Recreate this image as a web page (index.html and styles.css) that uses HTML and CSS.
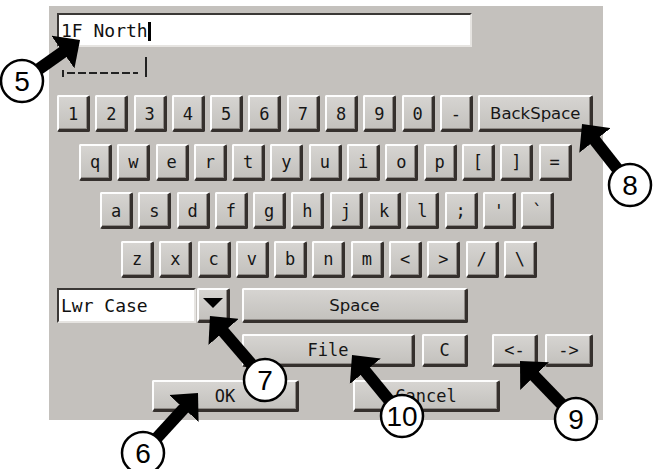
FILE: index.html
```html
<!DOCTYPE html>
<html>
<head>
<meta charset="utf-8">
<link rel="stylesheet" href="styles.css">
</head>
<body>
<div class="panel">
  <div class="input"><span class="txt">1F North</span><span class="caret"></span></div>
  <div class="indicator"><span class="tick"></span><span class="dashes"></span><span class="bar"></span></div>
  <div class="row r1">
    <div class="key">1</div><div class="key">2</div><div class="key">3</div><div class="key">4</div><div class="key">5</div><div class="key">6</div><div class="key">7</div><div class="key">8</div><div class="key">9</div><div class="key">0</div><div class="key">-</div><div class="key sans bs">BackSpace</div>
  </div>
  <div class="row r2">
    <div class="key">q</div><div class="key">w</div><div class="key">e</div><div class="key">r</div><div class="key">t</div><div class="key">y</div><div class="key">u</div><div class="key">i</div><div class="key">o</div><div class="key">p</div><div class="key">[</div><div class="key">]</div><div class="key">=</div>
  </div>
  <div class="row r3">
    <div class="key">a</div><div class="key">s</div><div class="key">d</div><div class="key">f</div><div class="key">g</div><div class="key">h</div><div class="key">j</div><div class="key">k</div><div class="key">l</div><div class="key">;</div><div class="key">'</div><div class="key">`</div>
  </div>
  <div class="row r4">
    <div class="key">z</div><div class="key">x</div><div class="key">c</div><div class="key">v</div><div class="key">b</div><div class="key">n</div><div class="key">m</div><div class="key">&lt;</div><div class="key">&gt;</div><div class="key">/</div><div class="key">\</div>
  </div>
  <div class="row r5">
    <div class="select">Lwr Case</div>
    <div class="key dd"><span class="tri"></span></div>
    <div class="key sans space">Space</div>
  </div>
  <div class="row r6">
    <div class="key file">File</div>
    <div class="key c">C</div>
    <div class="key arrowl">&lt;-</div>
    <div class="key arrowr">-&gt;</div>
  </div>
  <div class="row r7">
    <div class="key ok">OK</div>
    <div class="key cancel">Cancel</div>
  </div>
</div>
<svg class="notes" width="656" height="469" viewBox="0 0 656 469">
  <defs>
    <marker id="ah" markerUnits="userSpaceOnUse" markerWidth="21" markerHeight="40" viewBox="0 0 21 40" refX="1" refY="20" orient="auto">
      <path d="M0,0 L21,20 L0,40 Z" fill="#000"/>
    </marker>
  </defs>
  <g stroke="#000" stroke-width="12" marker-end="url(#ah)">
    <line x1="22" y1="81" x2="63.7" y2="51.5"/>
    <line x1="143" y1="453" x2="184.5" y2="407.7"/>
    <line x1="265" y1="380" x2="223" y2="331.2"/>
    <line x1="630" y1="185" x2="594.4" y2="139.7"/>
    <line x1="576" y1="419" x2="533.9" y2="375.4"/>
    <line x1="402" y1="416" x2="364.7" y2="370.5"/>
  </g>
  <g fill="#fff" stroke="#000" stroke-width="2.5">
    <circle cx="22" cy="81" r="21"/>
    <circle cx="143" cy="453" r="21"/>
    <circle cx="265" cy="380" r="21"/>
    <circle cx="630" cy="185" r="21"/>
    <circle cx="576" cy="419" r="21"/>
    <circle cx="402" cy="416" r="21"/>
  </g>
  <g class="num" text-anchor="middle">
    <text x="22" y="91">5</text>
    <text x="143" y="463">6</text>
    <text x="265" y="390">7</text>
    <text x="630" y="195">8</text>
    <text x="576" y="429">9</text>
    <text x="402" y="426">10</text>
  </g>
</svg>
</body>
</html>
```
FILE: styles.css
```css
* { box-sizing: border-box; }
html, body { margin: 0; padding: 0; }
body {
  background: #fff;
  position: relative;
  width: 656px;
  height: 469px;
  overflow: hidden;
  font-family: "DejaVu Sans Mono", monospace;
  color: #1c1c1c;
}
.panel {
  margin: 6px 0 0 49px;
  width: 554px;
  height: 414px;
  background: #c4c1bd;
  padding: 7px 0 0 8px;
  display: flex;
  flex-direction: column;
}
.input {
  width: 415px;
  height: 34px;
  flex: none;
  background: #fff;
  border-style: solid;
  border-width: 2px;
  border-color: #3b3836 #e6e4e1 #e6e4e1 #3b3836;
  display: flex;
  align-items: center;
  padding-left: 2px;
  font-size: 18px;
  color: #111;
}
.caret { width: 3px; height: 19px; background: #000; margin-top: 2px; }
.indicator {
  display: flex;
  align-items: flex-end;
  height: 20px;
  flex: none;
  margin-top: 10px;
  padding-left: 5px;
}
.tick { width: 2px; height: 7px; background: #222; }
.dashes {
  width: 71px;
  height: 2px;
  margin: 0 0 3px 3px;
  background: repeating-linear-gradient(90deg, #222 0 8px, transparent 8px 11px);
}
.bar { width: 2px; height: 20px; background: #222; margin-left: 7px; }

.row { display: flex; gap: 5.3px; margin-top: 11.5px; height: 37px; flex: none; }
.r1 { margin-top: 18px; }
.r2 { margin-left: 22px; }
.r3 { margin-left: 43px; }
.r4 { margin-left: 64px; }
.r5 { margin-top: 10px; height: 35px; gap: 0; }
.r6 { margin-top: 11px; height: 33px; gap: 0; }
.r7 { margin-top: 13px; height: 32px; gap: 0; }

.key {
  width: 33px;
  height: 100%;
  flex: none;
  display: flex;
  align-items: center;
  justify-content: center;
  font-size: 17px;
  color: #161616;
  background: linear-gradient(#d6d4d1, #c3c1bd);
  border-style: solid;
  border-width: 2px 3px 3px 2px;
  border-color: #fdfdfd #35302d #35302d #fdfdfd;
  box-shadow: inset -1px -1px 0 #8e8a86;
  border-radius: 2px;
  padding-top: 1px;
}
.sans { font-family: "DejaVu Sans", sans-serif; font-size: 16.5px; }
.bs { width: 115px; }
.select {
  width: 139px;
  height: 100%;
  background: #fff;
  border-style: solid;
  border-width: 2px;
  border-color: #3b3836 #e6e4e1 #e6e4e1 #3b3836;
  display: flex;
  align-items: center;
  padding-left: 2px;
  font-size: 18px;
  color: #111;
}
.dd { margin-left: 1px; }
.tri {
  width: 0; height: 0;
  border-left: 10px solid transparent;
  border-right: 10px solid transparent;
  border-top: 10px solid #000;
  margin-bottom: 4px;
}
.space { width: 226px; margin-left: 12px; }
.file { width: 173px; margin-left: 185px; font-size: 17px; }
.c { width: 46px; margin-left: 7px; }
.arrowl { width: 46px; margin-left: 24px; }
.arrowr { width: 48px; margin-left: 7px; }
.ok { width: 147px; margin-left: 95px; }
.cancel { width: 147px; margin-left: 54px; }

.notes { position: absolute; left: 0; top: 0; }
.num text { font-family: "Liberation Sans", Arial, sans-serif; font-size: 28px; fill: #000; }
```
